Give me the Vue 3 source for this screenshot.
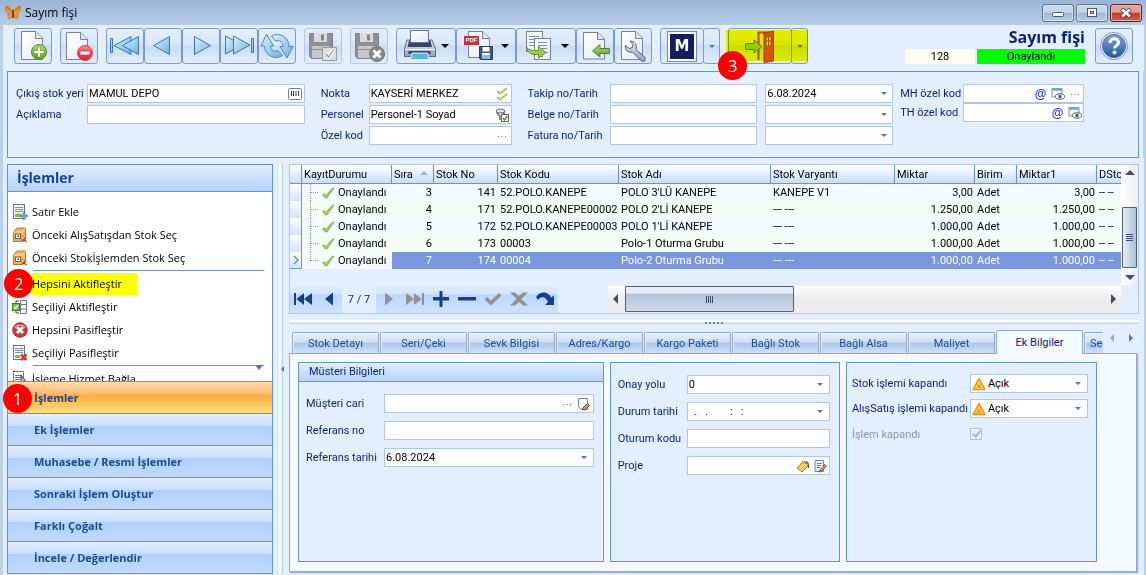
<template>
  <svg class="sprite" aria-hidden="true">
    <defs>
      <linearGradient id="gBlue" x1="0" y1="0" x2="1" y2="1">
        <stop offset="0" stop-color="#d9f1fc" />
        <stop offset="1" stop-color="#6db3e0" />
      </linearGradient>
      <linearGradient id="gGreen" x1="0" y1="0" x2="0" y2="1">
        <stop offset="0" stop-color="#b9e06a" />
        <stop offset="1" stop-color="#5f9f1c" />
      </linearGradient>
      <linearGradient id="gRed" x1="0" y1="0" x2="0" y2="1">
        <stop offset="0" stop-color="#ff8a8a" />
        <stop offset="1" stop-color="#e01b24" />
      </linearGradient>
      <linearGradient id="gPage" x1="0" y1="0" x2="1" y2="1">
        <stop offset="0" stop-color="#ffffff" />
        <stop offset="1" stop-color="#e6ebf8" />
      </linearGradient>
      <linearGradient id="gHelp" x1="0" y1="0" x2="0" y2="1">
        <stop offset="0" stop-color="#7fa9e0" />
        <stop offset="1" stop-color="#1f57a8" />
      </linearGradient>
      <linearGradient id="gSteel" x1="0" y1="0" x2="0" y2="1">
        <stop offset="0" stop-color="#eef1f8" />
        <stop offset="1" stop-color="#8f9cba" />
      </linearGradient>
    </defs>
    <symbol id="i-new" viewBox="1 1 36 34">
      <path d="M7.500 3.500H22L28.500 10V31.500H7.500Z" fill="url(#gPage)" stroke="#7480a8" />
      <path d="M21.500 3.500V10.500H28.500" fill="#dfe5f5" stroke="#7480a8" />
      <circle cx="25" cy="24" r="7.500" fill="url(#gGreen)" stroke="#4f8a1c" />
      <path d="M23.500 19h3v3.500H30v3h-3.500V29h-3v-3.500H20v-3h3.500Z" fill="#fff" stroke="#4f8a1c" stroke-width=".6" />
    </symbol>
    <symbol id="i-del" viewBox="1 1 36 34">
      <path d="M6.500 4.500H21L27.500 11V31.500H6.500Z" fill="url(#gPage)" stroke="#7480a8" />
      <path d="M20.500 4.500V11.500H27.500" fill="#dfe5f5" stroke="#7480a8" />
      <circle cx="25" cy="25" r="7.500" fill="url(#gRed)" stroke="#c8434a" />
      <rect x="20" y="23" width="10" height="4" fill="#fff" stroke="#c02a32" stroke-width=".8" />
    </symbol>
    <symbol id="i-first" viewBox="1 1 36 34">
      <g fill="url(#gBlue)" stroke="#3a76b4" stroke-linejoin="round">
        <rect x="4.500" y="10.500" width="2" height="14" />
        <path d="M25 8.500V26.500L8 17.500Z" />
        <path d="M32.500 8.500V26.500L16.500 17.500Z" />
      </g>
    </symbol>
    <symbol id="i-prev" viewBox="1 1 36 34">
      <path d="M25.500 8.500V26.500L9.500 17.500Z" fill="url(#gBlue)" stroke="#3a76b4" stroke-linejoin="round" />
    </symbol>
    <symbol id="i-next" viewBox="1 1 36 34">
      <path d="M12.500 8.500V26.500L28.500 17.500Z" fill="url(#gBlue)" stroke="#3a76b4" stroke-linejoin="round" />
    </symbol>
    <symbol id="i-last" viewBox="1 1 36 34">
      <g fill="url(#gBlue)" stroke="#3a76b4" stroke-linejoin="round">
        <path d="M5.500 8V26L22 17Z" />
        <path d="M13.500 8V26L30 17Z" />
        <rect x="31.500" y="10.500" width="2" height="14" />
      </g>
    </symbol>
    <symbol id="i-refresh" viewBox="1 1 36 34">
      <g fill="url(#gBlue)" stroke="#3a80b4" stroke-width=".9" stroke-linejoin="round">
        <path d="M8.500 6 3 18H6.500C6.500 25 12 29.500 18 29.500C20.500 29.500 22.500 29 24.500 27.500L20 22.500C16 24.500 12.500 22 12.500 18H15.500Z" />
        <path d="M29 30 35 18.500H31C31 12 26 6.500 19.500 6.500C17 6.500 15 7 13.500 8L17.500 13C21.500 11.500 25 14 25 18.500H22Z" />
      </g>
    </symbol>
    <symbol id="i-saveok" viewBox="1 1 36 34">
      <path d="M5.500 5.500H28.500V30.500H7.500L5.500 28.500Z" fill="#8d9097" stroke="#808389" />
      <rect x="10" y="5" width="13" height="9" fill="#d8dade" />
      <rect x="17" y="6.500" width="3" height="6" fill="#808389" />
      <rect x="8" y="18" width="18" height="12" fill="#c4c7cc" />
      <path d="M8 21.500H26" stroke="#8d9097" />
      <rect x="18.500" y="19.500" width="14" height="13" fill="#dcdee2" stroke="#9a9da3" />
      <path d="M22 26l2.500 3 5-7" fill="none" stroke="#fff" stroke-width="3.500" />
      <path d="M22 26l2.500 3 5-7" fill="none" stroke="#8d9097" stroke-width="1.200" />
    </symbol>
    <symbol id="i-savex" viewBox="1 1 36 34">
      <path d="M5.500 5.500H28.500V30.500H7.500L5.500 28.500Z" fill="#8d9097" stroke="#808389" />
      <rect x="10" y="5" width="13" height="9" fill="#d8dade" />
      <rect x="17" y="6.500" width="3" height="6" fill="#808389" />
      <rect x="8" y="18" width="18" height="12" fill="#c4c7cc" />
      <path d="M8 21.500H26" stroke="#8d9097" />
      <circle cx="27" cy="26" r="7.500" fill="#85888e" stroke="#73767c" />
      <path d="M23.500 22.500l7 7M30.500 22.500l-7 7" stroke="#fff" stroke-width="3" />
    </symbol>
    <symbol id="i-print" viewBox="1 1 44 34">
      <path d="M11 12H36L39.500 21V28.500H8.500V21Z" fill="url(#gSteel)" stroke="#5a678f" />
      <path d="M13 12.500H34.500L36 19H11.500Z" fill="#3a4468" />
      <rect x="14.500" y="2.500" width="18" height="12" fill="url(#gPage)" stroke="#68749a" />
      <rect x="12.500" y="23" width="22" height="3" fill="#39456b" />
      <path d="M16 25H31.500L33 31.500H14.500Z" fill="#57b5ea" stroke="#e8eefb" />
      <path d="M9 21.500H39" stroke="#fff" />
    </symbol>
    <symbol id="i-pdf" viewBox="1 1 44 34">
      <path d="M12.500 3.500H27L33.500 10V29.500H12.500Z" fill="url(#gPage)" stroke="#7480a8" />
      <path d="M26.500 3.500V10.500H33.500" fill="#dfe5f5" stroke="#7480a8" />
      <path d="M23.500 18.500H36.500V31.500H24.500L23.500 30.500Z" fill="#44537f" stroke="#2f3b63" />
      <rect x="26.500" y="19" width="7" height="4.500" fill="#fff" />
      <rect x="26" y="26" width="8" height="5" fill="#7cc4ec" />
      <rect x="26" y="25" width="8" height="2" fill="#fff" />
    </symbol>
    <symbol id="i-copy" viewBox="1 1 44 34">
      <rect x="10.500" y="3.500" width="16" height="20" fill="url(#gPage)" stroke="#7480a8" />
      <path d="M13 8.500H23M13 11.500H21M13 14.500H20M13 17.500H18" stroke="#7c88ae" />
      <rect x="18.500" y="10.500" width="16" height="21" fill="url(#gPage)" stroke="#7480a8" />
      <path d="M22 14.500H31M22 17.500H31M26 20.500H31M30 24.500H32M22 28.500H27" stroke="#7c88ae" />
      <path d="M10.500 19C13 23 18 22.500 22.500 22.500V18.500L30 24.500L22.500 30V26.500C16 27 11 25 10.500 19Z" fill="#a0d23c" stroke="#5f9120" stroke-linejoin="round" />
    </symbol>
    <symbol id="i-import" viewBox="1 1 36 34">
      <path d="M7.500 4.500H22L28.500 11V31H7.500Z" fill="url(#gPage)" stroke="#7480a8" />
      <path d="M21.500 4.500V11.500H28.500" fill="#dfe5f5" stroke="#7480a8" />
      <path d="M16.500 23 24 16.500V20.500H33.500V25.500H24V29Z" fill="url(#gGreen)" stroke="#5c7c43" stroke-linejoin="round" />
    </symbol>
    <symbol id="i-tools" viewBox="1 1 36 34">
      <path d="M7.500 3.500H22L28.500 10V31.500H7.500Z" fill="url(#gPage)" stroke="#7480a8" />
      <path d="M21.500 3.500V10.500H28.500" fill="#dfe5f5" stroke="#7480a8" />
      <path d="M16 13C20.500 13 23.500 17 22 21.500L31 29.500C32.500 32 30 34.500 27.500 33L18.500 24C14 25 10.500 21.500 11.500 17.500L15.500 20.500L18.500 19.500L19 16.500Z" fill="url(#gSteel)" stroke="#4f5a78" stroke-linejoin="round" />
    </symbol>
    <symbol id="i-door" viewBox="1 1 62 34">
      <path d="M30.500 32V4.500H45V32" fill="none" stroke="#c0481c" stroke-width="2" />
      <path d="M36 5 45.500 3V33L36 34.500Z" fill="#d9531e" stroke="#a23a12" />
      <path d="M38 9 43 8.500V18H38Z" fill="#f2e27a" stroke="#a2501e" />
      <path d="M40.500 8.500V18M38 13H43" stroke="#a2501e" />
      <path d="M17.500 15.500H26V12L34 18.500L26 25V21.500H17.500Z" fill="#8fce3c" stroke="#4d8a22" stroke-linejoin="round" />
    </symbol>
    <symbol id="i-help" viewBox="1 1 36 34">
      <circle cx="19" cy="18" r="13.500" fill="#f1f5fc" stroke="#8394bb" />
      <circle cx="19" cy="18" r="11.500" fill="url(#gHelp)" stroke="#4469a8" />
      <path d="M15 15C15 9.500 23.500 9.500 23.500 14.500C23.500 17.500 19.500 17.500 19.500 20.500" fill="none" stroke="#fff" stroke-width="3" />
      <circle cx="19.500" cy="24.500" r="2" fill="#fff" />
    </symbol>

    <symbol id="i-butterfly" viewBox="0 0 16 16">
      <path d="M7.500 7C6 3 2 0 .500 1.500C.500 5 1.500 8 4 8.500C2 10 3 14 4.500 14C6 13.500 7.500 11 8 9C8.500 11 10 13.500 11.500 14C13 14 14 10 12 8.500C14.500 8 15.500 5 15.500 1.500C14 0 10 3 8.500 7Z" fill="#f29a26" stroke="#c06a14" stroke-width=".6" />
      <path d="M1 1.500 6 6M15 1.500 10 6" stroke="#8a4a10" stroke-width=".7" />
      <path d="M8 5V13" stroke="#4a2808" stroke-width="1.400" />
    </symbol>
    <symbol id="i-barcode" viewBox="0 0 14 12">
      <rect x=".500" y=".500" width="13" height="11" rx="1" fill="#fff" stroke="#6f7fb4" />
      <path d="M3.500 3V8M5.500 3V8M8 3V8M10.500 3V8" stroke="#2b3a6a" />
    </symbol>
    <symbol id="i-ticks" viewBox="0 0 14 14">
      <path d="M2 4 5 6.500 12 1M2 10 5 12.500 12 7" fill="none" stroke="#a2cc5a" stroke-width="2" />
    </symbol>
    <symbol id="i-filter" viewBox="0 0 14 14">
      <ellipse cx="5.500" cy="3" rx="4.500" ry="2" fill="#dfe3ea" stroke="#5e6674" />
      <path d="M1.500 4.500 5 8V12M10 4.500 7 7" fill="none" stroke="#5e6674" stroke-width="1.500" />
      <rect x="6.500" y="6.500" width="7" height="7" fill="#fff" stroke="#5e6674" />
      <path d="M8 10l1.500 2 3-4" fill="none" stroke="#4b9a22" stroke-width="1.500" />
    </symbol>
    <symbol id="i-dots" viewBox="0 0 14 14">
      <path d="M3 7.500H4M6.500 7.500H7.500M10 7.500H11" stroke="#5a6f96" stroke-width="1.200" />
    </symbol>
    <symbol id="i-view" viewBox="0 0 14 14">
      <path d="M1 1.500H11V10H1Z" fill="#f4f7fb" stroke="#8092ad" />
      <path d="M1 2.500H11" stroke="#6fa5de" stroke-width="2.500" />
      <ellipse cx="9" cy="9.500" rx="4.500" ry="2.700" fill="#fff" stroke="#4d5868" />
      <circle cx="9" cy="9.500" r="1.700" fill="#4d5868" />
    </symbol>
    <symbol id="i-edit" viewBox="0 0 14 14">
      <path d="M1.500 1.500H10.500V12.500H4.500L1.500 10Z" fill="#fff" stroke="#7582ad" />
      <path d="M5 12 10.500 6.500 12.500 8.500 7.500 13Z" fill="#e3a052" stroke="#5c3b22" />
    </symbol>
    <symbol id="i-tag" viewBox="0 0 14 14">
      <path d="M1 9 7 2.500 12 3V7L6 13Z" fill="#fbc95c" stroke="#a8702c" />
      <path d="M9 5C10 2 13.500 4 12.500 9" fill="none" stroke="#3c4252" />
    </symbol>
    <symbol id="i-note" viewBox="0 0 14 14">
      <path d="M2 1.500H10.500V12.500H2Z" fill="#e6f1fd" stroke="#5f88c4" />
      <path d="M4 4.500H9M4 6.500H8M4 8.500H7" stroke="#4c86cc" />
      <path d="M6 12.500 11.500 5.500 13.500 7 8 13Z" fill="#e3a052" stroke="#5c3b22" stroke-width=".8" />
    </symbol>
    <symbol id="i-warn" viewBox="0 0 14 14">
      <path d="M7 1.500 13 12.500H1Z" fill="#ffd23c" stroke="#f08c1e" stroke-width="1.500" stroke-linejoin="round" />
      <path d="M5.500 7.500l3 3.500M8.500 7.500l-3 3.500" stroke="#e8781a" />
    </symbol>
    <symbol id="i-check" viewBox="0 0 14 14">
      <path d="M1.500 9 3 7.500 5 9.500 11 2.500 13 2 6 12H4.500Z" fill="#a0d45c" stroke="#739c48" stroke-width=".7" />
    </symbol>

    <symbol id="i-rowadd" viewBox="0 0 16 16">
      <rect x="1.500" y=".500" width="11" height="14" fill="#fff" stroke="#69749e" />
      <path d="M3 3.500H11M3 5.500H11M3 7.500H11" stroke="#7b88b4" />
      <rect x="3" y="9.500" width="6" height="3.500" fill="#7cc32a" />
      <path d="M12 8.500V15.500M8.500 12H15.500" stroke="#2f6fae" stroke-width="2.600" />
      <path d="M12 9.500V14.500M9.500 12H14.500" stroke="#8cc6f2" />
    </symbol>
    <symbol id="i-crate" viewBox="0 0 16 16">
      <path d="M1.500 5 5 1H13.500V11L10.500 14.500H1.500Z" fill="#f0b45e" stroke="#b87828" />
      <path d="M1.500 5H10.500L13.500 1.500" fill="none" stroke="#fbe0ac" />
      <rect x="3.500" y="7" width="5" height="4.500" fill="#fff" stroke="#8c5a20" />
      <rect x="5.500" y="8.500" width="1.500" height="1.500" fill="#333" />
      <path d="M9 10.500 14.500 15M10 14.500 14 11" stroke="#7a5a30" stroke-width="1.600" />
      <circle cx="10.500" cy="11" r="1.600" fill="#f6e2bb" stroke="#8c5a20" stroke-width=".6" />
    </symbol>
    <symbol id="i-selrows" viewBox="0 0 16 16">
      <path d="M8.500 1.500H14.500V14.500H8.500ZM8.500 5.500H14.500M8.500 10H14.500" fill="#fff" stroke="#69749e" />
      <path d="M7 2H4V4M4 12V14H7" fill="none" stroke="#445" />
      <rect x=".500" y="4.500" width="7" height="7" fill="#79c043" stroke="#3c7a1a" />
      <path d="M2 8l1.500 1.500L6 6.500" fill="none" stroke="#fff" stroke-width="1.400" />
    </symbol>
    <symbol id="i-cancel" viewBox="0 0 16 16">
      <circle cx="8" cy="8" r="7.200" fill="#d23b3b" stroke="#8c2222" />
      <path d="M2.500 6C4 2 12 2 13.500 6" fill="none" stroke="#ee9090" stroke-width="1.500" />
      <path d="M5 5l6 6M11 5l-6 6" stroke="#fff" stroke-width="2.800" />
    </symbol>
    <symbol id="i-rowdel" viewBox="0 0 16 16">
      <rect x="1.500" y=".500" width="11" height="14" fill="#fff" stroke="#69749e" />
      <path d="M3 3.500H11M3 5.500H11M3 7.500H11" stroke="#7b88b4" />
      <rect x="3" y="10" width="5" height="3" fill="#7cc32a" />
      <path d="M9 9.500l5.500 5.500M14.500 9.500L9 15" stroke="#cc3c3c" stroke-width="2.600" />
    </symbol>
    <symbol id="i-pick" viewBox="0 0 16 16">
      <rect x="1.500" y=".500" width="10" height="13" fill="none" stroke="#333" stroke-dasharray="2 1" />
      <path d="M3 4.500H9M3 6.500H9M3 8.500H8M3 10.500H8" stroke="#69749e" />
      <path d="M9 4V14L11.500 11.500H15Z" fill="#aab2c4" stroke="#445" />
    </symbol>

    <symbol id="n-first" viewBox="0 0 20 16"><path d="M1 2H3V14H1ZM11 2V14L3.500 8ZM19 2V14L11 8Z" fill="#12408c" /></symbol>
    <symbol id="n-prev" viewBox="0 0 20 16"><path d="M14 1.500V14.500L6 8Z" fill="#12408c" /></symbol>
    <symbol id="n-next" viewBox="0 0 20 16"><path d="M6 1.500V14.500L14 8Z" fill="#929292" /></symbol>
    <symbol id="n-last" viewBox="0 0 20 16"><path d="M17 2H19V14H17ZM1 2V14L9 8ZM9 2V14L16.500 8Z" fill="#929292" /></symbol>
    <symbol id="n-add" viewBox="0 0 20 16"><path d="M8.500 0H11.500V6H18V9.500H11.500V16H8.500V9.500H2V6H8.500Z" fill="#12408c" /></symbol>
    <symbol id="n-sub" viewBox="0 0 20 16"><path d="M1 6H19V9.500H1Z" fill="#12408c" /></symbol>
    <symbol id="n-ok" viewBox="0 0 20 16"><path d="M1.500 8.500 4 6 8 9.500 16 2 18.500 4.500 8 14.500Z" fill="#929292" /></symbol>
    <symbol id="n-x" viewBox="0 0 20 16"><path d="M1 1.500H6L10 5 14 1.500H19L12.500 8 19 14.500H14L10 11 6 14.500H1L7.500 8Z" fill="#929292" /></symbol>
    <symbol id="n-redo" viewBox="0 0 20 16"><path d="M1 6C5 0 13 0 16 6.500L19 4.500V14H10L13 11C11 5.500 6 4.500 3 9Z" fill="#12408c" /></symbol>
  </svg>

  <div class="window">
    <header class="titlebar">
      <svg class="icon16"><use href="#i-butterfly" /></svg>
      <span class="caption">Sayım fişi</span>
      <div class="win-buttons">
        <button class="win-btn" aria-label="Simge durumuna küçült">
          <svg viewBox="0 0 12 10"><rect x=".500" y="4.500" width="11" height="4" rx="1" fill="#fff" stroke="#4f5a6b" /></svg>
        </button>
        <button class="win-btn" aria-label="Ekranı kapla">
          <svg viewBox="0 0 12 10"><rect x="1.500" y=".500" width="9" height="8" fill="#fff" stroke="#4f5a6b" /><rect x="4.500" y="3.500" width="3" height="2" fill="#9db6d4" stroke="#4f5a6b" /></svg>
        </button>
        <button class="win-btn close" aria-label="Kapat">
          <svg viewBox="0 0 12 10"><path d="M1.500 1 10.500 9M10.500 1 1.500 9" stroke="#5b3a40" stroke-width="4" /><path d="M2 1.500 10 8.500M10 1.500 2 8.500" stroke="#fff" stroke-width="2.400" /></svg>
        </button>
      </div>
    </header>

    <div class="toolbar">
      <div v-for="(group, g) in toolGroups" :key="g" class="tool-group">
        <button v-for="t in group" :key="t.icon" class="tool" :class="{ wide: t.wide, off: t.off }" :disabled="t.off" :aria-label="t.label">
          <svg><use :href="'#i-' + t.icon" /></svg>
          <span v-if="t.icon === 'pdf'" class="pdf-tag">PDF</span>
          <i v-if="t.wide" class="caret"></i>
        </button>
      </div>
      <div class="tool-group">
        <button class="tool m-btn"><span class="m-logo">M</span></button>
        <button class="tool split" aria-label="M seçenekleri"><i class="caret small"></i></button>
      </div>
      <div class="tool-group exit">
        <button class="tool exit-btn" aria-label="Çıkış"><svg><use href="#i-door" /></svg></button>
        <button class="tool split" aria-label="Çıkış seçenekleri"><i class="caret small"></i></button>
        <span class="marker"></span>
        <span class="badge badge-3">3</span>
      </div>
      <div class="status">
        <h1>Sayım fişi</h1>
        <div class="status-row">
          <span class="doc-no">128</span>
          <span class="doc-state">Onaylandı</span>
        </div>
      </div>
      <button class="tool" aria-label="Yardım"><svg><use href="#i-help" /></svg></button>
    </div>

    <section class="filters">
      <div v-for="(col, c) in filterCols" :key="c" class="filter-col" :class="'fc' + c">
        <template v-for="f in col" :key="f.id">
          <label v-if="f.label" :for="f.id">{{ f.label }}</label>
          <div class="field">
            <input :id="f.id" type="text" :value="f.value" :aria-label="f.label ? null : f.title" />
            <button v-for="ic in f.icons" :key="ic" class="field-btn" :aria-label="ic">
              <span v-if="ic === 'at'" class="at">@</span>
              <i v-else-if="ic === 'caret'" class="caret small"></i>
              <svg v-else><use :href="'#i-' + ic" /></svg>
            </button>
          </div>
        </template>
      </div>
    </section>

    <div class="body">
      <aside class="sidebar">
        <h2>İşlemler</h2>
        <div class="action-list">
          <template v-for="a in actions" :key="a.text">
            <hr v-if="a.sep" />
            <a href="#" class="action" :class="{ marked: a.marked }">
              <svg v-if="a.icon" class="icon16"><use :href="'#i-' + a.icon" /></svg>
              <span v-else class="icon16"></span>
              <span class="action-text">{{ a.text }}</span>
              <span v-if="a.marked" class="badge badge-2">2</span>
            </a>
          </template>
          <i class="scroll-more"></i>
        </div>
        <nav>
          <button v-for="(s, i) in sections" :key="s" class="section" :class="{ active: i === 0 }">
            {{ s }}
            <span v-if="i === 0" class="badge badge-1">1</span>
          </button>
        </nav>
      </aside>

      <div class="v-splitter"><i></i></div>

      <main>
        <section class="grid-box">
          <div class="grid-top">
            <div class="grid-view">
              <table>
                <colgroup>
                  <col v-for="(w, i) in colWidths" :key="i" :style="{ width: w + 'px' }" />
                </colgroup>
                <thead>
                  <tr>
                    <th></th>
                    <th v-for="h in headers" :key="h">{{ h }}<i v-if="h === 'Sıra'" class="sort"></i></th>
                  </tr>
                </thead>
                <tbody>
                  <tr v-for="(r, i) in rows" :key="r.no" :class="{ selected: i === selected, alt: i % 2 }">
                    <td class="indicator">
                      <svg v-if="i === selected" viewBox="0 0 6 10"><path d="M1 1 5 5 1 9" fill="none" stroke="#5b8fdc" stroke-width="1.500" /></svg>
                    </td>
                    <td class="state">
                      <span class="tree" :class="{ end: i === rows.length - 1 }"></span>
                      <svg class="icon14"><use href="#i-check" /></svg>Onaylandı
                    </td>
                    <td class="num">{{ r.sira }}</td>
                    <td class="num">{{ r.no }}</td>
                    <td>{{ r.kod }}</td>
                    <td>{{ r.ad }}</td>
                    <td>{{ r.varyant }}</td>
                    <td class="num">{{ r.miktar }}</td>
                    <td>Adet</td>
                    <td class="num">{{ r.miktar }}</td>
                    <td>-- --</td>
                  </tr>
                </tbody>
              </table>
            </div>
            <div class="v-scroll">
              <i class="arrow up"></i>
              <div class="v-thumb"></div>
              <i class="arrow down"></i>
            </div>
          </div>
          <div class="grid-foot">
            <div class="navigator">
              <button v-for="n in ['first', 'prev']" :key="n" :aria-label="n"><svg><use :href="'#n-' + n" /></svg></button>
            </div>
            <span class="position">7 / 7</span>
            <div class="navigator">
              <button v-for="n in ['next', 'last', 'add', 'sub', 'ok', 'x', 'redo']" :key="n" :aria-label="n"><svg><use :href="'#n-' + n" /></svg></button>
            </div>
            <div class="h-scroll">
              <i class="arrow left"></i>
              <div class="h-thumb"></div>
              <i class="arrow right"></i>
            </div>
          </div>
        </section>

        <div class="h-splitter"><i></i></div>

        <div class="tabs" role="tablist">
          <button v-for="t in tabs" :key="t" class="tab" :class="{ active: t === activeTab }" role="tab" @click="activeTab = t">{{ t }}</button>
          <button class="tab cut" role="tab">Se</button>
          <span class="tab-arrows"><i class="arrow left"></i><i class="arrow right"></i></span>
        </div>

        <section class="pane">
          <fieldset class="card card-1">
            <h3>Müsteri Bilgileri</h3>
            <div class="form">
              <label for="cari">Müşteri cari</label>
              <div class="field">
                <input id="cari" type="text" />
                <button class="field-btn" aria-label="Seç"><svg><use href="#i-dots" /></svg></button>
                <button class="field-btn" aria-label="Düzenle"><svg><use href="#i-edit" /></svg></button>
              </div>
              <label for="refno">Referans no</label>
              <div class="field"><input id="refno" type="text" /></div>
              <label for="reftarih">Referans tarihi</label>
              <div class="field">
                <input id="reftarih" type="text" value="6.08.2024" />
                <button class="field-btn" aria-label="Takvim"><i class="caret small"></i></button>
              </div>
            </div>
          </fieldset>

          <fieldset class="card card-2">
            <div class="form">
              <label for="onay">Onay yolu</label>
              <div class="field">
                <select id="onay"><option>0</option></select>
                <i class="caret small over"></i>
              </div>
              <label for="durum">Durum tarihi</label>
              <div class="field">
                <input id="durum" type="text" value="  .   .        :   :" />
                <button class="field-btn" aria-label="Takvim"><i class="caret small"></i></button>
              </div>
              <label for="oturum">Oturum kodu</label>
              <div class="field"><input id="oturum" type="text" /></div>
              <label for="proje">Proje</label>
              <div class="field">
                <input id="proje" type="text" />
                <button class="field-btn" aria-label="Etiket"><svg><use href="#i-tag" /></svg></button>
                <button class="field-btn" aria-label="Düzenle"><svg><use href="#i-note" /></svg></button>
              </div>
            </div>
          </fieldset>

          <fieldset class="card card-3">
            <div class="form">
              <label for="stokkapandi">Stok işlemi kapandı</label>
              <div class="field warn">
                <svg class="icon14"><use href="#i-warn" /></svg>
                <select id="stokkapandi"><option>Açık</option></select>
                <i class="caret small over"></i>
              </div>
              <label for="alissatis">AlışSatış işlemi kapandı</label>
              <div class="field warn">
                <svg class="icon14"><use href="#i-warn" /></svg>
                <select id="alissatis"><option>Açık</option></select>
                <i class="caret small over"></i>
              </div>
              <label for="kapandi" class="disabled">İşlem kapandı</label>
              <input id="kapandi" class="tick" type="checkbox" checked disabled />
            </div>
          </fieldset>
        </section>
      </main>
    </div>
  </div>
</template>

<script setup>
import { ref } from 'vue'

const toolGroups = [
  [{ icon: 'new', label: 'Yeni' }],
  [{ icon: 'del', label: 'Sil' }],
  [
    { icon: 'first', label: 'İlk' },
    { icon: 'prev', label: 'Önceki' },
    { icon: 'next', label: 'Sonraki' },
    { icon: 'last', label: 'Son' },
    { icon: 'refresh', label: 'Yenile' }
  ],
  [{ icon: 'saveok', label: 'Kaydet', off: true }],
  [{ icon: 'savex', label: 'Vazgeç', off: true }],
  [
    { icon: 'print', label: 'Yazdır', wide: true },
    { icon: 'pdf', label: 'PDF kaydet', wide: true },
    { icon: 'copy', label: 'Kopyala', wide: true },
    { icon: 'import', label: 'Al' },
    { icon: 'tools', label: 'Ayarlar' }
  ]
]

const filterCols = [
  [
    { id: 'stokyeri', label: 'Çıkış stok yeri', value: 'MAMUL DEPO', icons: ['barcode'] },
    { id: 'aciklama', label: 'Açıklama' }
  ],
  [
    { id: 'nokta', label: 'Nokta', value: 'KAYSERİ MERKEZ', icons: ['ticks'] },
    { id: 'personel', label: 'Personel', value: 'Personel-1 Soyad', icons: ['filter'] },
    { id: 'ozelkod', label: 'Özel kod', icons: ['dots'] }
  ],
  [
    { id: 'takip', label: 'Takip no/Tarih' },
    { id: 'belge', label: 'Belge no/Tarih' },
    { id: 'fatura', label: 'Fatura no/Tarih' }
  ],
  [
    { id: 'takiptarih', title: 'Takip tarihi', value: '6.08.2024', icons: ['caret'] },
    { id: 'belgetarih', title: 'Belge tarihi', icons: ['caret'] },
    { id: 'faturatarih', title: 'Fatura tarihi', icons: ['caret'] }
  ],
  [
    { id: 'mh', label: 'MH özel kod', icons: ['at', 'view', 'dots'] },
    { id: 'th', label: 'TH özel kod', icons: ['at', 'view'] }
  ]
]

const actions = [
  { icon: 'rowadd', text: 'Satır Ekle' },
  { icon: 'crate', text: 'Önceki AlışSatışdan Stok Seç' },
  { icon: 'crate', text: 'Önceki Stokİşlemden Stok Seç' },
  { text: 'Hepsini Aktifleştir', sep: true, marked: true },
  { icon: 'selrows', text: 'Seçiliyi Aktifleştir' },
  { icon: 'cancel', text: 'Hepsini Pasifleştir' },
  { icon: 'rowdel', text: 'Seçiliyi Pasifleştir' },
  { icon: 'pick', text: 'İşleme Hizmet Bağla', sep: true }
]

const sections = ['İşlemler', 'Ek İşlemler', 'Muhasebe / Resmi İşlemler', 'Sonraki İşlem Oluştur', 'Farklı Çoğalt', 'İncele / Değerlendir']

const headers = ['KayıtDurumu', 'Sıra', 'Stok No', 'Stok Kodu', 'Stok Adı', 'Stok Varyantı', 'Miktar', 'Birim', 'Miktar1', 'DSto']
const colWidths = [12, 90, 42, 64, 121, 152, 124, 80, 42, 80, 60]

const rows = [
  { sira: 3, no: 141, kod: '52.POLO.KANEPE', ad: "POLO 3'LÜ KANEPE", varyant: 'KANEPE V1', miktar: '3,00' },
  { sira: 4, no: 171, kod: '52.POLO.KANEPE00002', ad: "POLO 2'Lİ KANEPE", varyant: '--- ---', miktar: '1.250,00' },
  { sira: 5, no: 172, kod: '52.POLO.KANEPE00003', ad: "POLO 1'Lİ KANEPE", varyant: '--- ---', miktar: '1.000,00' },
  { sira: 6, no: 173, kod: '00003', ad: 'Polo-1 Oturma Grubu', varyant: '--- ---', miktar: '1.000,00' },
  { sira: 7, no: 174, kod: '00004', ad: 'Polo-2 Oturma Grubu', varyant: '--- ---', miktar: '1.000,00' }
]
const selected = ref(4)

const tabs = ['Stok Detayı', 'Seri/Çeki', 'Sevk Bilgisi', 'Adres/Kargo', 'Kargo Paketi', 'Bağlı Stok', 'Bağlı Alsa', 'Maliyet', 'Ek Bilgiler']
const activeTab = ref('Ek Bilgiler')
</script>

<style>
body {
  margin: 0;
  background: #b9d1ea;
}
</style>

<style scoped>
* {
  box-sizing: border-box;
}

.sprite {
  position: absolute;
  width: 0;
  height: 0;
}

.window {
  min-height: 100vh;
  display: flex;
  flex-direction: column;
  padding: 0 2px 0 3px;
  background: #b9d1ea;
  font-family: Roboto, "Noto Sans", sans-serif;
  font-size: 11px;
  line-height: 15px;
  color: #000;
}

button,
input,
select {
  font: inherit;
  color: inherit;
  margin: 0;
}

button {
  padding: 0;
  border: 0;
  background: none;
}

svg {
  display: block;
  flex: none;
}

.icon16 {
  width: 16px;
  height: 16px;
  flex: none;
}

.icon14 {
  width: 14px;
  height: 14px;
}

/* title bar */
.titlebar {
  display: flex;
  align-items: center;
  gap: 4px;
  height: 25px;
  margin: 0 -2px 0 -3px;
  padding: 0 4px 0 5px;
  background: linear-gradient(#9ab4d3, #b5cde8);
}

.caption {
  flex: 1;
  font-family: "Open Sans", sans-serif;
  font-size: 12px;
}

.win-buttons {
  display: flex;
  gap: 2px;
}

.win-btn {
  width: 32px;
  height: 18px;
  display: flex;
  align-items: center;
  justify-content: center;
  border: 1px solid #5d7390;
  border-radius: 3px;
  background: linear-gradient(#c6d7ea 45%, #9db7d4 50%, #b6cce4);
  box-shadow: inset 0 0 0 1px #d5e3f2;
}

.win-btn svg {
  width: 12px;
  height: 10px;
}

.win-btn.close {
  border-color: #5a1f22;
  background: linear-gradient(#e0a398 45%, #c23c28 50%, #c9604a);
  box-shadow: inset 0 0 0 1px #e9b5aa;
}

/* toolbar */
.toolbar {
  display: flex;
  gap: 8px;
  padding: 3px 11px 7px;
  background: #e3eeff;
}

.tool-group {
  display: flex;
  position: relative;
}

.tool {
  position: relative;
  width: 38px;
  height: 36px;
  display: flex;
  align-items: center;
  border: 1px solid #7d9bc8;
  border-radius: 3px;
  background: linear-gradient(#e4eefc 0, #d9e7f8 45%, #c8dcf2 50%, #e1edfd);
}

.tool svg {
  width: 36px;
  height: 34px;
}

.tool.wide {
  width: 60px;
}

.tool.wide svg {
  width: 44px;
}

.tool.off {
  border-color: #b3c8e6;
}

.tool.m-btn {
  width: 44px;
  justify-content: center;
}

.m-logo {
  width: 30px;
  height: 31px;
  border: 1px solid #7b83b8;
  background: #141c66;
  box-shadow: inset 0 0 0 2px #fff;
  color: #fff;
  font: bold 15px/29px "DejaVu Sans", sans-serif;
}

.pdf-tag {
  position: absolute;
  left: 7px;
  top: 7px;
  width: 15px;
  background: #d22f35;
  color: #fff;
  font: bold 6px/9px "Liberation Sans", sans-serif;
}

.tool.exit-btn {
  width: 64px;
}

.exit-btn svg {
  width: 62px;
}

.tool.split {
  width: 17px;
  margin-left: -1px;
  justify-content: center;
}

.caret {
  border: 4px solid transparent;
  border-top-color: #000;
  border-bottom-width: 0;
}

.caret.small {
  border-width: 3px 3px 0;
  border-top-color: #4a7ab8;
}

.marker {
  position: absolute;
  inset: 2px 0 3px -2px;
  background: #ff0;
  mix-blend-mode: multiply;
}

.badge {
  position: absolute;
  width: 29px;
  height: 29px;
  border-radius: 50%;
  background: #f00;
  color: #fff;
  font: 17px/29px "Open Sans", sans-serif;
  text-align: center;
}

.badge-3 {
  left: -10px;
  top: 23px;
}

.status {
  margin-left: auto;
  width: 180px;
  margin-right: 2px;
}

.status h1 {
  margin: 0 0 2px;
  font-family: "Open Sans", sans-serif;
  font-size: 16px;
  line-height: 19px;
  text-align: right;
  color: #0b1f7a;
}

.status-row {
  display: grid;
  grid-template-columns: 70px 1fr;
  gap: 2px;
  text-align: center;
}

.doc-no {
  background: #fffbee;
}

.doc-state {
  background: #0f0;
}

/* filters */
.filters {
  display: flex;
  gap: 16px;
  padding: 12px 54px 12px 8px;
  border: 1px solid #6594d0;
  background: #e3eeff;
  box-shadow: 0 0 0 4px #e3eeff;
  margin: 0 5px 0 4px;
}

.filter-col {
  display: grid;
  gap: 2px 0;
  align-content: start;
  align-items: center;
  color: #0b1f7a;
}

.fc0 {
  grid-template-columns: 71px 1fr;
  flex: 218 1 71px;
}

.fc1 {
  grid-template-columns: 48px 1fr;
  flex: 143 1 48px;
}

.fc2 {
  grid-template-columns: 82px 1fr;
  flex: 148 1 82px;
}

.fc3 {
  flex: 128 1 0;
  margin-left: -8px;
}

.fc4 {
  grid-template-columns: 63px 1fr;
  flex: 121 1 63px;
  margin-left: -9px;
  row-gap: 0;
}

label {
  color: #0b1f7a;
  white-space: nowrap;
}

.field {
  position: relative;
  display: flex;
  align-items: center;
  height: 19px;
  min-width: 0;
  border: 1px solid #b0c6e4;
  background: #fff;
  color: #000;
}

.field input {
  flex: 1;
  min-width: 0;
  width: 0;
  height: 17px;
  padding: 0 0 0 1px;
  border: 0;
  outline: 0;
  background: none;
  white-space: pre;
}

.field select {
  flex: 1;
  min-width: 0;
  height: 17px;
  padding: 0 16px 0 1px;
  border: 0;
  outline: 0;
  appearance: none;
  background: none;
}

.field-btn {
  width: 17px;
  height: 17px;
  display: flex;
  align-items: center;
  justify-content: center;
}

.field-btn svg {
  width: 14px;
  height: 14px;
}

.caret.over {
  position: absolute;
  right: 6px;
  pointer-events: none;
}

.at {
  color: #1f35e0;
  font: bold 12px/14px "Liberation Sans", sans-serif;
}

/* body */
.body {
  flex: 1;
  display: grid;
  grid-template-columns: 266px 16px 1fr;
  padding: 6px 5px 1px 4px;
  background: #e3eeff;
}

.sidebar {
  display: flex;
  flex-direction: column;
  border: 1px solid #6594d0;
  background: #fff;
}

.sidebar h2 {
  margin: 0;
  padding-left: 9px;
  font-family: "Open Sans", sans-serif;
  font-size: 14px;
  line-height: 26px;
  color: #15428b;
  border-bottom: 1px solid #6594d0;
  background: linear-gradient(#e3eeff, #b4d2ff);
}

.action-list {
  position: relative;
  flex: 1 0 0;
  min-height: 189px;
  padding: 8px 8px 0 4px;
  clip-path: inset(0 0 0 -20px);
}

.action {
  position: relative;
  display: flex;
  align-items: center;
  gap: 4px;
  height: 23px;
  color: #000;
  text-decoration: none;
  font-family: "Open Sans", sans-serif;
  font-size: 11px;
}

.action-text {
  line-height: 22px;
}

.marked .action-text {
  padding-right: 15px;
  background: #ff0;
}

.action-list hr {
  height: 1px;
  margin: 1px 0 1px 21px;
  border: 0;
  background: #6594d0;
}

.scroll-more {
  position: absolute;
  right: 9px;
  bottom: 11px;
  border: 4px solid transparent;
  border-top: 5px solid #4a7ab8;
  border-bottom: 0;
}

.badge-2 {
  left: -8px;
  top: -3px;
}

.section {
  position: relative;
  display: block;
  width: 100%;
  height: 32px;
  padding-left: 26px;
  border-top: 1px solid #6594d0;
  text-align: left;
  font-family: "Open Sans", sans-serif;
  font-size: 11px;
  font-weight: bold;
  color: #1f4a8a;
  background: linear-gradient(#e3eeff 0, #c9dfff 38%, #aed1ff 40%, #c0daff);
}

.section.active {
  background: linear-gradient(#ffd9aa 0, #ffbb6e 38%, #ffab3f 42%, #fee17a);
}

.badge-1 {
  left: -5px;
  top: 2px;
  font-weight: normal;
}

.v-splitter {
  display: flex;
  align-items: center;
  margin-left: 6px;
  width: 4px;
  border-left: 2px solid #f8fbff;
  border-right: 1px solid #b8d2f5;
}

.v-splitter i {
  border: 3px solid transparent;
  border-right-color: #4a7ab8;
  border-left: 0;
}

main {
  min-width: 0;
  display: flex;
  flex-direction: column;
}

/* data grid */
.grid-box {
  border: 1px solid #b0c6e4;
}

.grid-top {
  display: flex;
  height: 120px;
}

.grid-view {
  flex: 1;
  min-width: 0;
  overflow: hidden;
}

table {
  width: 867px;
  table-layout: fixed;
  border-collapse: separate;
  border-spacing: 0;
}

th {
  height: 19px;
  padding: 1px 0 0 2px;
  overflow: hidden;
  font-weight: normal;
  text-align: left;
  white-space: nowrap;
  border-right: 1px solid #6594d0;
  border-bottom: 1px solid #6594d0;
  background: linear-gradient(#fff, #c7ddff);
}

.sort {
  display: inline-block;
  margin: 0 0 3px 7px;
  border: 4px solid transparent;
  border-bottom: 4px solid #8fb8f0;
  border-top: 0;
}

td {
  height: 17px;
  padding: 1px 2px 0;
  line-height: 16px;
  overflow: hidden;
  white-space: nowrap;
  background: #f4faff;
}

.alt td {
  background: #f4fcf3;
}

.num {
  text-align: right;
}

.selected td {
  color: #fff;
  background: #7b96df;
}

td.indicator {
  padding: 0 0 0 3px;
  border-right: 1px solid #6594d0;
  background: linear-gradient(#fff, #d0e2fd);
}

.indicator svg {
  width: 6px;
  height: 10px;
}

.selected td.indicator {
  border-bottom: 1px solid #6594d0;
}

td.state {
  display: flex;
  align-items: center;
  padding: 0;
}

.selected td.state {
  color: #000;
  background: #f4faff;
}

.tree {
  width: 8px;
  height: 17px;
  margin: 0 3px 0 8px;
  border-left: 1px dotted #7d93b8;
  background: repeating-linear-gradient(90deg, #7d93b8 0 1px, transparent 1px 2px) 0 8px / 8px 1px no-repeat;
}

.tree.end {
  height: 9px;
  margin-bottom: 8px;
}

.state .icon14 {
  margin-right: 3px;
}

.v-scroll {
  width: 17px;
  display: flex;
  flex-direction: column;
  align-items: center;
  padding: 5px 0;
  background: linear-gradient(90deg, #fff, #ececec);
}

.v-thumb {
  width: 15px;
  height: 61px;
  margin: auto 0 7px;
  border: 1px solid #4b5f8a;
  border-radius: 1px;
  background:
    repeating-linear-gradient(#3e4d70 0 1px, transparent 1px 2px) center / 7px 7px no-repeat,
    linear-gradient(90deg, #e6edf6, #aebfd4);
}

.arrow {
  border: 5px solid transparent;
}

.arrow.up {
  border-top: 0;
  border-bottom-color: #3e4d70;
}

.arrow.down {
  border-bottom: 0;
  border-top-color: #3e4d70;
}

.arrow.left {
  border-left: 0;
  border-right-color: #3e4d70;
}

.arrow.right {
  border-right: 0;
  border-left-color: #3e4d70;
}

.grid-foot {
  display: flex;
  align-items: center;
  height: 28px;
}

.navigator {
  display: flex;
  align-items: center;
  height: 27px;
  background: linear-gradient(#dfecff 0, #d4e5ff 30%, #bcd7fd 32%, #cfe2ff);
}

.navigator button {
  width: 26px;
  height: 27px;
  display: flex;
  align-items: center;
  justify-content: center;
}

.navigator svg {
  width: 20px;
  height: 16px;
}

.position {
  width: 34px;
  text-align: center;
  color: #0b1f7a;
}

.h-scroll {
  flex: 1;
  display: flex;
  align-items: center;
  height: 27px;
  margin: 0 17px 0 50px;
  padding: 0 5px;
  background: linear-gradient(#fff, #ececec 50%);
}

.h-thumb {
  width: 33.5%;
  height: 26px;
  margin: 0 auto 0 7px;
  border: 1px solid #4b5f8a;
  border-radius: 1px;
  background:
    repeating-linear-gradient(90deg, #3e4d70 0 1px, transparent 1px 2px) center / 7px 7px no-repeat,
    linear-gradient(#e6edf6 25%, #b4c4d8 30%, #ccd9e8);
}

.h-splitter {
  display: flex;
  justify-content: center;
  height: 4px;
  margin: 6px 0;
  border-top: 2px solid #f8fbff;
  border-bottom: 1px solid #b8d2f5;
}

.h-splitter i {
  width: 19px;
  height: 2px;
  background: repeating-linear-gradient(90deg, #5b86c4 0 2px, transparent 2px 4px);
}

/* tabs */
.tabs {
  display: flex;
  align-items: flex-end;
  height: 23px;
  padding-left: 3px;
}

.tab {
  flex: 0 1 87px;
  height: 21px;
  margin-right: 1px;
  border: 1px solid #8fa9d0;
  border-bottom: 0;
  border-radius: 2px 2px 0 0;
  white-space: nowrap;
  color: #1f4a9a;
  background: linear-gradient(#e3eefb 0, #d0e1f6 45%, #a9c6ea 50%, #cfe1f8);
  box-shadow: inset 1px 1px 0 #eef5fd;
}

.tab.active {
  position: relative;
  height: 24px;
  margin-bottom: -1px;
  color: #0b1f7a;
  background: #f4f8ff;
}

.tab.cut {
  flex: 0 0 19px;
  padding-left: 5px;
  border-right: 0;
  border-radius: 2px 0 0;
  overflow: hidden;
  text-align: left;
}

.tab-arrows {
  display: flex;
  gap: 15px;
  margin: 0 6px 11px auto;
}

.tab-arrows .arrow {
  border-top-width: 4px;
  border-bottom-width: 4px;
}

.tab-arrows .left {
  border-right: 4px solid #8fadd6;
}

.tab-arrows .right {
  border-left: 4px solid #4a7ab8;
}

.pane {
  flex: 1;
  display: flex;
  gap: 6px;
  margin: 0 2px 2px 0;
  padding: 8px 39px 9px 8px;
  border: 1px solid #8fa9d0;
  background: #f4f8ff;
  box-shadow: 1px 1px 1px #9cb3d6;
}

.card {
  min-width: 0;
  margin: 0;
  padding: 0;
  border: 1px solid #6594d0;
  background: #e3eeff;
}

.card-1 {
  flex: 306 1 0;
}

.card-2 {
  flex: 230 1 0;
}

.card-3 {
  flex: 251 1 0;
}

.card h3 {
  margin: 0;
  padding-left: 10px;
  font-size: 11px;
  font-weight: normal;
  line-height: 18px;
  color: #0b1f7a;
  border-bottom: 1px solid #6594d0;
  background: linear-gradient(#e3eeff, #b4d2ff);
}

.form {
  display: grid;
  align-items: center;
  gap: 8px 0;
}

.card-1 .form {
  grid-template-columns: 78px 1fr;
  padding: 12px 9px 0 7px;
}

.card-2 .form {
  grid-template-columns: 69px 1fr;
  padding: 12px 9px 0 7px;
}

.card-3 .form {
  grid-template-columns: 118px 1fr;
  gap: 6px 0;
  padding: 11px 8px 0 5px;
}

.warn .icon14 {
  margin-left: 1px;
}

.warn select {
  padding-left: 2px;
}

.disabled {
  color: #8d96a8;
}

.tick {
  appearance: none;
  width: 12px;
  height: 12px;
  margin: 4px 0;
  border: 1px solid #a9bdd8;
  background: #e9f1fc;
}

.tick::after {
  content: "";
  display: block;
  width: 3px;
  height: 6px;
  margin: 0 3px;
  border: solid #9fb4d2;
  border-width: 0 2px 2px 0;
  transform: rotate(40deg);
}
</style>
